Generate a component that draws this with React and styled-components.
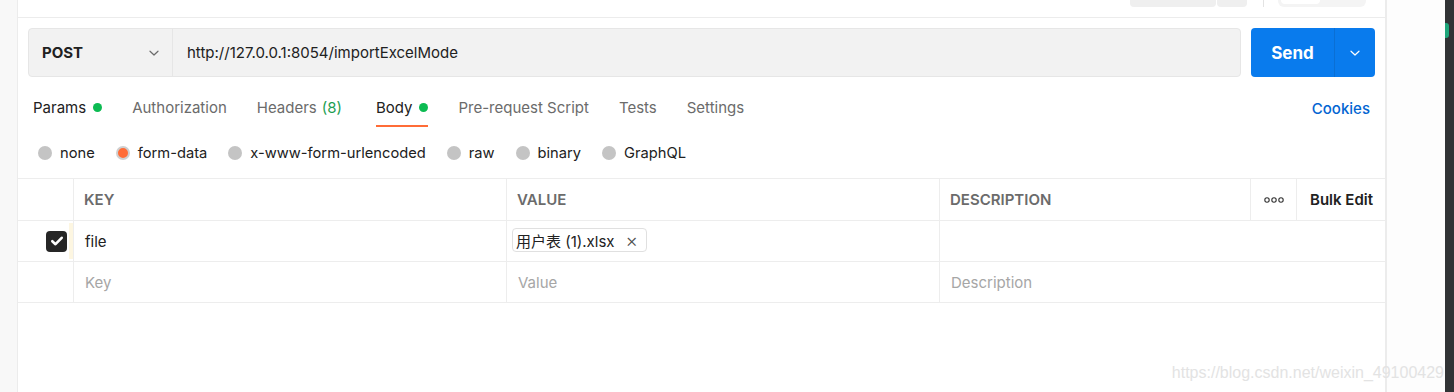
import React from 'react'
import styled, { createGlobalStyle } from 'styled-components'

const GlobalStyle = createGlobalStyle`
    html, body {
        margin: 0;
        padding: 0;
        background: #ffffff;
    }
    body {
        font-family: Inter, "Noto Sans", "Noto Sans CJK SC", sans-serif;
        color: #212121;
    }
    * {
        box-sizing: border-box;
    }
`

const tabs = [
    { label: 'Params', dot: true },
    { label: 'Authorization' },
    { label: 'Headers', count: '(8)' },
    { label: 'Body', dot: true, active: true },
    { label: 'Pre-request Script' },
    { label: 'Tests' },
    { label: 'Settings' },
]

const bodyModes = ['none', 'form-data', 'x-www-form-urlencoded', 'raw', 'binary', 'GraphQL']

const Chevron = ({ color }) => (
    <svg width="12" height="12" viewBox="0 0 12 12" fill="none">
        <path d="M2 4.2 6 8l4-3.8" stroke={color} strokeWidth="1.2" strokeLinecap="round" strokeLinejoin="round" />
    </svg>
)

const Check = () => (
    <svg width="16" height="16" viewBox="0 0 16 16" fill="none">
        <path d="M3.3 8.2 6.5 11.2 12.7 4.8" stroke="#ffffff" strokeWidth="2.6" strokeLinecap="round" strokeLinejoin="round" />
    </svg>
)

const Dots = () => (
    <svg width="20" height="6" viewBox="0 0 20 6" fill="none">
        <circle cx="3" cy="3" r="2.2" stroke="#333" strokeWidth="1.1" />
        <circle cx="10" cy="3" r="2.2" stroke="#333" strokeWidth="1.1" />
        <circle cx="17" cy="3" r="2.2" stroke="#333" strokeWidth="1.1" />
    </svg>
)

export default function App () {
    return (
        <Page>
            <GlobalStyle />
            <LeftRail />
            <Main>
                <TopBar>
                    <StubGroup>
                        <Stub w={86} />
                        <Stub w={30} />
                    </StubGroup>
                    <StubDivider />
                    <StubToggle>
                        <StubKnob />
                    </StubToggle>
                </TopBar>

                <UrlRow>
                    <UrlBar>
                        <Method>
                            POST
                            <Chevron color="#6b6b6b" />
                        </Method>
                        <UrlText>http://127.0.0.1:8054/importExcelMode</UrlText>
                    </UrlBar>
                    <SendButton>
                        <SendLabel>Send</SendLabel>
                        <SendArrow>
                            <Chevron color="#ffffff" />
                        </SendArrow>
                    </SendButton>
                </UrlRow>

                <TabBar>
                    <Tabs>
                        {tabs.map(t => (
                            <Tab key={t.label} active={t.active}>
                                {t.label}
                                {t.count && <Count>{t.count}</Count>}
                                {t.dot && <Dot />}
                            </Tab>
                        ))}
                    </Tabs>
                    <Cookies>Cookies</Cookies>
                </TabBar>

                <RadioRow>
                    {bodyModes.map(m => (
                        <RadioItem key={m}>
                            <Radio selected={m === 'form-data'} />
                            {m}
                        </RadioItem>
                    ))}
                </RadioRow>

                <Table>
                    <HeadCell />
                    <HeadCell>KEY</HeadCell>
                    <HeadCell>VALUE</HeadCell>
                    <HeadCell>DESCRIPTION</HeadCell>
                    <HeadCell center>
                        <Dots />
                    </HeadCell>
                    <HeadCell dark last>Bulk Edit</HeadCell>

                    <CheckCell>
                        <CheckBox>
                            <Check />
                        </CheckBox>
                        <DragStripe />
                    </CheckCell>
                    <Cell>file</Cell>
                    <Cell tight>
                        <FileChip>
                            用户表 (1).xlsx
                            <ChipClose>×</ChipClose>
                        </FileChip>
                    </Cell>
                    <Cell span last />

                    <CheckCell />
                    <Cell placeholder>Key</Cell>
                    <Cell placeholder>Value</Cell>
                    <Cell placeholder span last>Description</Cell>
                </Table>
            </Main>
            <Gutter />
            <DarkStrip>
                <GreenMark />
            </DarkStrip>
            <Watermark>https://blog.csdn.net/weixin_49100429</Watermark>
        </Page>
    )
}

const Page = styled.div`
    position: relative;
    display: flex;
    width: 1454px;
    height: 392px;
    overflow: hidden;
    font-size: 15px;
`

const LeftRail = styled.div`
    width: 18px;
    flex-shrink: 0;
    background: #f8f8f8;
    border-right: 1px solid #ececec;
`

const Main = styled.div`
    width: 1369px;
    flex-shrink: 0;
    display: flex;
    flex-direction: column;
    background: #ffffff;
    border-right: 2px solid #ececec;
`

const TopBar = styled.div`
    height: 18px;
    display: flex;
    justify-content: flex-end;
    align-items: flex-start;
    padding-right: 19px;
    border-bottom: 1px solid #ececec;
`

const StubGroup = styled.div`
    display: flex;
    gap: 1px;
`

const Stub = styled.div`
    width: ${p => p.w}px;
    height: 7px;
    background: #efefef;
    border-radius: 0 0 4px 4px;
`

const StubDivider = styled.div`
    width: 1px;
    height: 7px;
    background: #e3e3e3;
    margin: 0 14px 0 16px;
`

const StubToggle = styled.div`
    width: 88px;
    height: 7px;
    padding: 0 0 0 3px;
    background: #f4f4f4;
    border-radius: 0 0 6px 6px;
`

const StubKnob = styled.div`
    width: 39px;
    height: 4px;
    background: #ffffff;
    border-radius: 0 0 4px 4px;
`

const UrlRow = styled.div`
    display: flex;
    gap: 10px;
    padding: 0 10px;
    margin-top: 10px;
    height: 49px;
`

const UrlBar = styled.div`
    flex: 1;
    display: flex;
    align-items: stretch;
    background: #f2f2f2;
    border: 1px solid #e6e6e6;
    border-radius: 4px;
`

const Method = styled.div`
    width: 144px;
    display: flex;
    align-items: center;
    justify-content: space-between;
    padding: 0 12px 0 13px;
    font-weight: 700;
    font-size: 15px;
    border-right: 1px solid #e6e6e6;
`

const UrlText = styled.div`
    display: flex;
    align-items: center;
    padding-left: 14px;
    font-size: 15px;
    color: #212121;
`

const SendButton = styled.div`
    width: 124px;
    display: flex;
    background: #097bed;
    border-radius: 4px;
    color: #ffffff;
`

const SendLabel = styled.div`
    width: 84px;
    display: flex;
    align-items: center;
    justify-content: center;
    font-weight: 700;
    font-size: 17px;
    border-right: 1px solid #0a6fd4;
`

const SendArrow = styled.div`
    flex: 1;
    display: flex;
    align-items: center;
    justify-content: center;
`

const TabBar = styled.div`
    display: flex;
    justify-content: space-between;
    align-items: flex-start;
    margin-top: 14px;
    padding: 0 15px;
`

const Tabs = styled.div`
    display: flex;
    gap: 30px;
`

const Tab = styled.div`
    display: flex;
    align-items: center;
    height: 36px;
    padding-bottom: 2px;
    border-bottom: 2px solid ${p => (p.active ? '#ff6c37' : 'transparent')};
    color: ${p => (p.active ? '#212121' : '#6b6b6b')};
    font-size: 15px;
    white-space: nowrap;

    &:first-child {
        color: #212121;
    }
`

const Count = styled.span`
    color: #1e9e52;
    margin-left: 5px;
    margin-right: 4px;
`

const Dot = styled.span`
    width: 9px;
    height: 9px;
    margin-left: 7px;
    border-radius: 50%;
    background: #0cbb52;
`

const Cookies = styled.div`
    height: 34px;
    display: flex;
    align-items: center;
    color: #0265d2;
    font-weight: 500;
    font-size: 15px;
`

const RadioRow = styled.div`
    height: 51px;
    display: flex;
    align-items: center;
    gap: 21px;
    padding-left: 20px;
`

const RadioItem = styled.div`
    display: flex;
    align-items: center;
    gap: 8px;
    font-size: 14.7px;
    color: #212121;
`

const Radio = styled.span`
    width: 14px;
    height: 14px;
    border-radius: 50%;
    background: ${p => (p.selected ? '#ff6c37' : '#c4c4c4')};
    border: ${p => (p.selected ? '2px solid #cfcfcf' : 'none')};
`

const Table = styled.div`
    display: grid;
    grid-template-columns: 56px 433px 433px 311px 46px 1fr;
    grid-auto-rows: 41px;
    grid-template-rows: 42px;
    border-top: 1px solid #ededed;
`

const HeadCell = styled.div`
    display: flex;
    align-items: center;
    justify-content: ${p => (p.center ? 'center' : 'flex-start')};
    padding: ${p => (p.center ? '0' : '0 10px')};
    padding-left: ${p => (p.dark ? '13px' : undefined)};
    border-bottom: 1px solid #ededed;
    border-right: ${p => (p.last ? 'none' : '1px solid #ededed')};
    font-weight: 600;
    font-size: 15px;
    color: ${p => (p.dark ? '#212121' : '#6b6b6b')};
`

const Cell = styled.div`
    grid-column: ${p => (p.span ? 'span 3' : 'auto')};
    display: flex;
    align-items: center;
    padding: 0 ${p => (p.tight ? '5px' : '11px')};
    border-bottom: 1px solid #ededed;
    border-right: ${p => (p.last ? 'none' : '1px solid #ededed')};
    font-size: 15px;
    color: ${p => (p.placeholder ? '#a6a6a6' : '#212121')};
`

const CheckCell = styled.div`
    display: flex;
    align-items: center;
    justify-content: flex-end;
    gap: 2px;
    border-bottom: 1px solid #ededed;
    border-right: 1px solid #ededed;
`

const CheckBox = styled.span`
    width: 21px;
    height: 21px;
    border-radius: 4px;
    background: #262626;
    display: flex;
    align-items: center;
    justify-content: center;
`

const DragStripe = styled.span`
    width: 4px;
    height: 36px;
    background: #fdf6e1;
`

const FileChip = styled.span`
    display: flex;
    align-items: center;
    height: 24px;
    padding: 0 8px 0 3px;
    border: 1px solid #e0e0e0;
    border-radius: 4px;
    font-size: 15px;
    color: #212121;
    margin-top: -2px;
`

const ChipClose = styled.span`
    margin-left: 11px;
    font-size: 19px;
    font-weight: 300;
    color: #505050;
    line-height: 1;
`

const Gutter = styled.div`
    width: 58px;
    flex-shrink: 0;
    background: #fdfdfd;
`

const DarkStrip = styled.div`
    flex: 1;
    background: #313335;
    padding-top: 23px;
`

const GreenMark = styled.div`
    width: 4px;
    height: 15px;
    background: #1ea57a;
    border-radius: 0 3px 3px 0;
`

const Watermark = styled.div`
    position: absolute;
    right: 10px;
    bottom: 10px;
    font-family: "Liberation Sans", Arial, sans-serif;
    font-size: 16px;
    color: #e3e3e3;
    white-space: nowrap;
`
